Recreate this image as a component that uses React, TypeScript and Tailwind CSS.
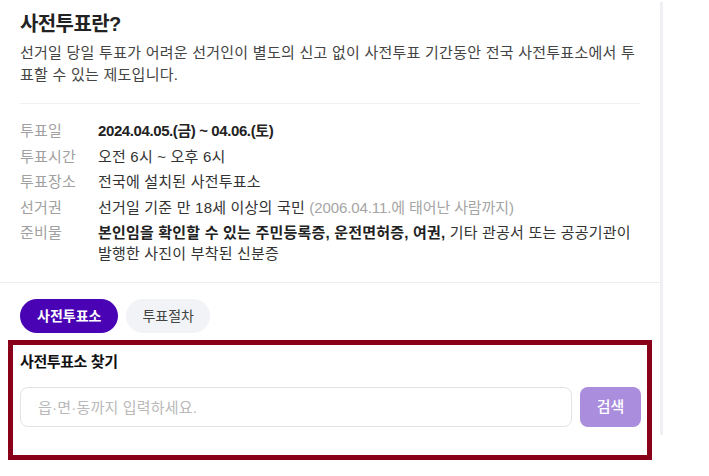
import React, { useState } from 'react';

const rows: { label: string; value: React.ReactNode }[] = [
    { label: '투표일', value: <span className="font-bold text-[#222] tracking-[-0.4px]">2024.04.05.(금) ~ 04.06.(토)</span> },
    { label: '투표시간', value: '오전 6시 ~ 오후 6시' },
    { label: '투표장소', value: '전국에 설치된 사전투표소' },
    {
        label: '선거권',
        value: (
            <>
                선거일 기준 만 18세 이상의 국민 <span className="text-[#a5a5a5] tracking-[-0.1px]">(2006.04.11.에 태어난 사람까지)</span>
            </>
        ),
    },
    {
        label: '준비물',
        value: (
            <>
                <span className="font-bold text-[#222]">본인임을 확인할 수 있는 주민등록증, 운전면허증, 여권,</span> 기타 관공서 또는 공공기관이 발행한 사진이 부착된 신분증
            </>
        ),
    },
];

export default function App() {
    const [tab, setTab] = useState<'place' | 'step'>('place');
    const [query, setQuery] = useState('');

    return (
        <div className="min-h-screen bg-white text-[#333] font-['Liberation_Sans','Noto_Sans_CJK_KR',sans-serif]">
            <div className="w-[663px] h-[433px] mt-[2px] border-r-[3px] border-[#efeff4]">
                {/* 사전투표 안내 */}
                <section className="px-5 pt-2">
                    <h2 className="text-[20px] leading-[28px] font-bold text-[#222] tracking-[-0.6px]">사전투표란?</h2>
                    <p className="mt-1 text-[15px] leading-[22px] text-[#444] tracking-[0.25px]">
                        선거일 당일 투표가 어려운 선거인이 별도의 신고 없이 사전투표 기간동안 전국 사전투표소에서 투표할 수 있는 제도입니다.
                    </p>
                    <div className="mt-[17px] h-px bg-[#f0f0f0]" />
                    <dl className="mt-4 flex flex-col gap-[4.6px] text-[15px] leading-[21px] tracking-[0.2px]">
                        {rows.map(row => (
                            <div key={row.label} className="flex">
                                <dt className="w-[78px] shrink-0 text-[#a0a0a0]">{row.label}</dt>
                                <dd className="flex-1 text-[#333]">{row.value}</dd>
                            </div>
                        ))}
                    </dl>
                </section>

                <div className="mt-[18px] h-px bg-[#eeeeee]" />

                {/* 탭 */}
                <div className="px-5 pt-4 flex gap-2">
                    <button
                        onClick={() => setTab('place')}
                        className={tab === 'place'
                            ? 'h-[34px] px-[17px] rounded-full bg-[#4a03b4] text-white text-[14px] font-bold'
                            : 'h-[34px] px-[17px] rounded-full bg-[#f2f3f7] text-[#444] text-[14px]'}
                    >
                        사전투표소
                    </button>
                    <button
                        onClick={() => setTab('step')}
                        className={tab === 'step'
                            ? 'h-[34px] px-4 rounded-full bg-[#4a03b4] text-white text-[14px] font-bold'
                            : 'h-[34px] px-4 rounded-full bg-[#f2f3f7] text-[#444] text-[14px]'}
                    >
                        투표절차
                    </button>
                </div>

                {/* 사전투표소 찾기 */}
                <section className="mx-[13px] mt-3 pl-[7px] pr-[6px] pt-[6px] pb-[28px] outline-[5px] outline-solid outline-[#8b0019] bg-white">
                    <h3 className="text-[15px] leading-[22px] font-bold text-[#111] tracking-[-0.4px]">사전투표소 찾기</h3>
                    <div className="mt-[14px] flex gap-2">
                        <input
                            value={query}
                            onChange={e => setQuery(e.target.value)}
                            placeholder="읍·면·동까지 입력하세요."
                            className="flex-1 h-10 px-[17px] rounded-lg border border-[#e3e3e3] text-[15px] text-[#333] placeholder-[#b9b9b9] tracking-[0.2px] outline-none"
                        />
                        <button
                            disabled={!query}
                            className="w-[61px] h-10 rounded-lg bg-[#ab8ddd] text-white text-[15px] font-medium"
                        >
                            검색
                        </button>
                    </div>
                </section>
            </div>
        </div>
    );
}
